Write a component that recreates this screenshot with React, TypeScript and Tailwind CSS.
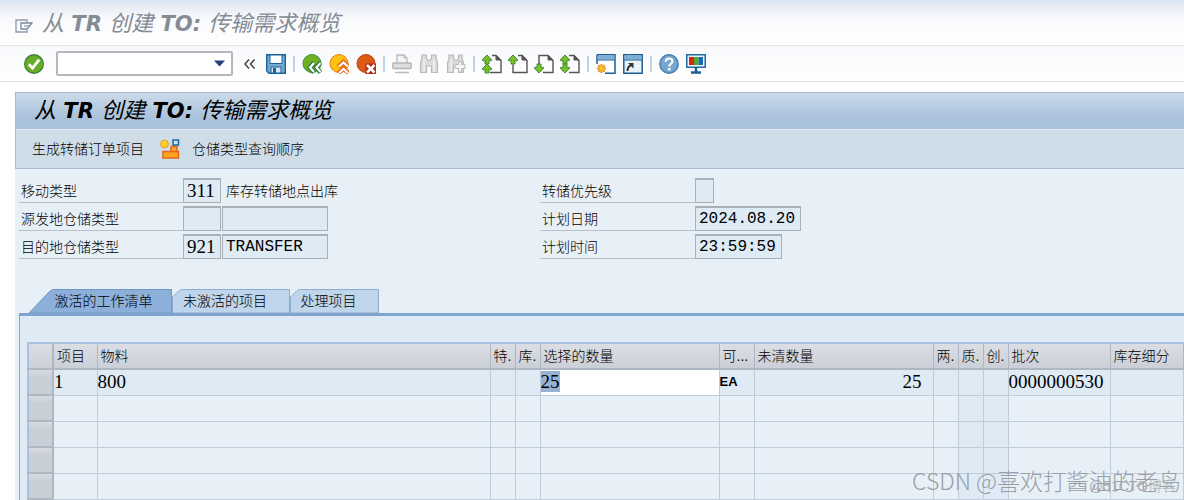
import React from 'react';

const CJK = "font-['Liberation_Sans','Noto_Sans_CJK_SC',sans-serif]";
const SERIF = "font-['Liberation_Serif','Noto_Sans_CJK_SC',serif] text-[19px]";
const MONO = "font-['Liberation_Mono','Noto_Sans_CJK_SC',monospace] text-[16px]";

const Icon: React.FC<{ children: React.ReactNode }> = ({ children }) => (
  <svg width="20" height="20" viewBox="0 0 20 20" fill="none" aria-hidden="true">
    {children}
  </svg>
);

const Tool: React.FC<{ label: string; disabled?: boolean; children: React.ReactNode }> = ({ label, disabled, children }) => (
  <button type="button" aria-label={label} disabled={disabled} className="h-5 w-5 shrink-0">
    <Icon>{children}</Icon>
  </button>
);

const Sep = () => <span className="h-4 w-0.5 shrink-0 bg-[#bfd2e6]" />;

const upArrow = (y: number) => `M5 ${y}l4.600 4.600v1h-2.600v3.400h-4v-3.400h-2.600v-1z`;
const downArrow = (y: number) => `M5 ${y}l4.600 -4.600v-1h-2.600v-3.400h-4v3.400h-2.600v1z`;

const PageIcon: React.FC<{ arrows: string[]; left: string }> = ({ arrows, left }) => (
  <>
    <path d={left} stroke="#555" strokeWidth="1.4" />
    <path d="M14 1v5h5z" fill="#555" stroke="#555" />
    {arrows.map((d) => (
      <path key={d} d={d} fill="#7cbd2c" stroke="#35862f" strokeWidth="0.9" />
    ))}
  </>
);

const Title: React.FC<{ className: string }> = ({ className }) => (
  <h1 className={`flex items-baseline whitespace-pre text-[22px] leading-7 font-normal italic ${className}`}>
    从<b className="font-['DejaVu_Sans',sans-serif] text-[21px]"> TR </b>
    创建<b className="font-['DejaVu_Sans',sans-serif] text-[21px]"> TO: </b>
    传输需求概览
  </h1>
);

interface FieldProps {
  id: string;
  label: string;
  values: { text: string; width: string; font?: string }[];
  note?: string;
  labelWidth: string;
}

const Field: React.FC<FieldProps> = ({ id, label, values, note, labelWidth }) => (
  <div className="flex h-[25px] items-center">
    <label htmlFor={id} className={`h-full border-b border-[#b9c0c7] pl-0.5 leading-[26px] ${labelWidth}`}>
      {label}
    </label>
    <div className="flex h-full gap-px">
      {values.map((v, i) => (
        <input
          key={i}
          id={i === 0 ? id : undefined}
          aria-label={i === 0 ? undefined : `${label} ${i + 1}`}
          readOnly
          defaultValue={v.text}
          className={`h-full border border-t-2 border-[#a9b0b6] bg-[#deebf5] px-[3px] text-black outline-none ${v.width} ${v.font ?? MONO}`}
        />
      ))}
    </div>
    {note && <span className="pl-[5px] leading-[26px]">{note}</span>}
  </div>
);

const columns = [
  { name: '项目', width: 'w-[44px]' },
  { name: '物料', width: 'w-[393px]' },
  { name: '特.', width: 'w-[25px]' },
  { name: '库.', width: 'w-[25px]' },
  { name: '选择的数量', width: 'w-[179px]' },
  { name: '可...', width: 'w-[35px]' },
  { name: '未清数量', width: 'w-[179px]' },
  { name: '两.', width: 'w-[25px]' },
  { name: '质.', width: 'w-[25px]' },
  { name: '创.', width: 'w-[25px]' },
  { name: '批次', width: 'w-[102px]' },
  { name: '库存细分', width: '' },
];

const rows = [
  ['1', '800', '', '', '25', 'EA', '25', '', '', '', '0000000530', ''],
  ...Array.from({ length: 5 }, () => Array<string>(12).fill('')),
];

const cellClass = (row: number, col: number) => {
  if (row === 0 && col === 4) return 'bg-white';
  if (row === 0 || col === 8 || col === 9) return 'bg-[#deebf5]';
  return 'bg-[#e8f0f7]';
};

const Cell: React.FC<{ text: string; col: number }> = ({ text, col }) => {
  if (!text) return null;
  if (col === 4) return <span className="bg-[#96b3d3]">{text}</span>;
  if (col === 5) return <span className="block font-['Liberation_Sans',sans-serif] text-[13px] font-bold">{text}</span>;
  if (col === 6) return <span className="block pr-[11px] text-right">{text}</span>;
  return <>{text}</>;
};

const SystemBar = () => (
  <div className="flex h-[37px] shrink-0 items-center border-y border-[#e0e4ea] bg-linear-to-b from-[#f8f9fc] to-white pl-6">
    <Tool label="确认">
      <circle cx="10" cy="10" r="9.3" fill="#67ad25" stroke="#3d8438" strokeWidth="1.4" />
      <path d="M4.8 10.2l3.8 4L15.2 5.6" stroke="#fff" strokeWidth="2.8" />
    </Tool>
    <div className="ml-3 flex h-[25px] w-[177px] shrink-0 items-center rounded-xs border-2 border-[#b5b8bb] bg-white">
      <input aria-label="命令" className="h-full min-w-0 flex-1 px-1 outline-none" />
      <button type="button" aria-label="历史" className="mr-1.5">
        <svg width="11" height="7" viewBox="0 0 11 7">
          <path d="M0 0.5h11L5.5 6.5z" fill="#23407a" />
        </svg>
      </button>
    </div>
    <button type="button" aria-label="收起" className="ml-[10px] mr-[9px] h-5 w-[14px] shrink-0">
      <svg width="14" height="20" viewBox="0 0 14 20" fill="none">
        <path d="M6 5.5L2 10l4 4.500M11.500 5.500l-4 4.500 4 4.500" stroke="#444" strokeWidth="1.5" />
      </svg>
    </button>
    <div className="flex items-center gap-[7px]">
      <Tool label="保存">
        <path d="M.7.7h18.600v18.600H3L.7 17z" fill="#76a9d0" stroke="#18639c" strokeWidth="1.4" />
        <path d="M4 1h12v8.500H4z" fill="#fff" stroke="#18639c" />
        <path d="M5 13h10v6H5z" fill="#d9e8f3" stroke="#18639c" />
        <path d="M7 14h3v5H7z" fill="#18639c" />
      </Tool>
      <Sep />
      <Tool label="返回">
        <circle cx="10" cy="9.500" r="9" fill="#6eb122" stroke="#3f8b3a" />
        <path d="M12 8.500L8 13.500l4 5M18.500 8.500l-4 5 4 5" stroke="#2b7a38" strokeWidth="4.500" />
        <path d="M12 9L8 13.500l4 4.500M18.500 9l-4 4.500 4 4.500" stroke="#fff" strokeWidth="2.200" />
      </Tool>
      <Tool label="退出">
        <circle cx="10" cy="9.500" r="9" fill="#ffc20e" stroke="#e97816" />
        <path d="M9.500 12.500l5-4.500 5 4.500M9.500 19l5-4.500 5 4.500" stroke="#e2661c" strokeWidth="4.500" />
        <path d="M10 12.500l4.500-4 4.500 4M10 19l4.500-4 4.500 4" stroke="#fff" strokeWidth="2.200" />
      </Tool>
      <Tool label="取消">
        <circle cx="10" cy="9.500" r="9" fill="#dc5a14" stroke="#bd3d12" />
        <path d="M9.500 9.500h10.500v10.500H9.500z" fill="#b32b17" />
        <path d="M11 11l7.500 7.500M18.500 11L11 18.500" stroke="#fff" strokeWidth="2.600" />
      </Tool>
      <Sep />
      <Tool label="打印" disabled>
        <path d="M5 9V1h7l3 3v5" fill="#f4f4f4" stroke="#bbb" strokeWidth="1.300" />
        <path d="M12 1v3h3" stroke="#bbb" />
        <rect x=".7" y="9" width="18.600" height="5.500" rx="1" fill="#dedede" stroke="#b5b5b5" strokeWidth="1.300" />
        <path d="M3 18.500h14" stroke="#bbb" strokeWidth="1.500" />
      </Tool>
      <Tool label="查找" disabled>
        <path d="M3 1h4.500v3L9 6.500h2L12.500 4V1H17v3l1.500 5v9.500h-6V12h-5v6.500h-6V9L3 4z" fill="#dcdcdc" stroke="#b9b9b9" strokeWidth="1.200" />
        <path d="M5 5v12M15 5v12" stroke="#efefef" strokeWidth="1.500" />
      </Tool>
      <Tool label="继续查找" disabled>
        <path d="M3 1h4.500v3L9 6.500h2L12.500 4V1H16v3l1.500 5v9.500h-5V12h-5v6.500h-6V9L3 4z" fill="#dcdcdc" stroke="#b9b9b9" strokeWidth="1.200" />
        <path d="M5 5v12" stroke="#efefef" strokeWidth="1.500" />
        <path d="M12.500 7.500h3v3h3.500v4h-3.500v3.500h-3v-3.500H9v-4h3.500z" fill="#f5f5f5" stroke="#b9b9b9" />
      </Tool>
      <Sep />
      <div className="flex gap-1.5">
        <Tool label="第一页">
          <PageIcon left="M10 1.500h4l5 5v12H8" arrows={[upArrow(1), upArrow(10)]} />
        </Tool>
        <Tool label="上一页">
          <PageIcon left="M10 1.500h4l5 5v12H5v-8" arrows={[upArrow(1)]} />
        </Tool>
        <Tool label="下一页">
          <PageIcon left="M5 10V1.500h9l5 5v12H9" arrows={[downArrow(19)]} />
        </Tool>
        <Tool label="最后一页">
          <PageIcon left="M9 1.500h5l5 5v12H9" arrows={[upArrow(1), downArrow(19)]} />
        </Tool>
      </div>
      <Sep />
      <Tool label="新建会话">
        <path d="M1 .8h18v18.400H9M1 10V.8" fill="#fff" stroke="#1d5f95" strokeWidth="1.500" />
        <path d="M1.500 1.500h17v4h-17z" fill="#7caed6" />
        <path d="M1 6h18" stroke="#1d5f95" />
        <path d="M5.500 10v9M1 14.500h9M2.300 11.300l6.400 6.400M8.700 11.300l-6.400 6.400" stroke="#f59a12" strokeWidth="2" />
        <circle cx="5.500" cy="14.500" r="2" fill="#ffc52c" />
      </Tool>
      <Tool label="创建快捷方式">
        <path d="M.8.8h18.400v18.400H.8z" fill="#eaf2f9" stroke="#1d5f95" strokeWidth="1.500" />
        <path d="M1.500 1.500h17v4h-17z" fill="#7caed6" />
        <path d="M1 6h18" stroke="#1d5f95" />
        <path d="M4.500 17c0-3.500 1-5 4-6" stroke="#333" strokeWidth="2" />
        <path d="M5 9h5.500v5.500z" fill="#333" />
      </Tool>
      <Sep />
      <Tool label="帮助">
        <circle cx="10" cy="10" r="9.200" fill="#76a6d0" stroke="#417fb2" strokeWidth="1.400" />
        <path d="M6.800 7.800c0-4.300 6.600-4.300 6.600-.4 0 2.300-3.100 2.300-3.100 5" stroke="#fff" strokeWidth="2.200" />
        <circle cx="10.200" cy="15.200" r="1.400" fill="#fff" />
      </Tool>
      <Tool label="自定义布局">
        <path d="M.8.8h18.400v12.400H.8z" fill="#eef5fb" stroke="#1d6ba3" strokeWidth="1.500" />
        <path d="M3 3h5v8H3z" fill="#df2118" />
        <path d="M8 3h4.500v8H8z" fill="#4fab2c" />
        <path d="M12.500 3H17v8h-4.500z" fill="#1869b0" />
        <path d="M10 13.500v4M5 18.500h10" stroke="#1d5f95" strokeWidth="2.500" />
      </Tool>
    </div>
  </div>
);

export default function App() {
  return (
    <div className={`relative flex h-screen flex-col overflow-hidden bg-white text-[14px] font-light text-black ${CJK}`}>
      <header className="flex h-[45px] shrink-0 items-center border-t-2 border-[#d9e4f5] bg-linear-to-b from-[#e1e8f1] via-[#f9fafc] via-40% to-white pl-[15px]">
        <svg width="18" height="14" viewBox="0 0 18 14" fill="none" aria-hidden="true" className="mt-1">
          <path d="M12 3V1H1v12h11v-2" stroke="#8d98ad" strokeWidth="1.300" />
          <path d="M6 4h11l-5 6H6z" stroke="#7e89a0" strokeWidth="1.300" />
          <path d="M9 7h5" stroke="#7e89a0" />
        </svg>
        <Title className="pl-[9px] text-[#858b94]" />
      </header>
      <SystemBar />

      <main className="mt-[10px] ml-[15px] flex min-h-0 flex-1 flex-col bg-[#e8f0f7]">
        <div className="shrink-0 border border-r-0 border-[#a9b9cf] bg-[#cfdde9]">
          <div className="flex h-[37px] items-center border-b border-[#dfe9f3] bg-linear-to-b from-[#cbdbe9] to-[#a9c1da] to-70% pl-[18px]">
            <Title className="text-black" />
          </div>
          <div className="flex h-[38px] items-center pl-4">
            <button type="button">生成转储订单项目</button>
            <button type="button" className="ml-4 flex items-center gap-3">
              <Icon>
                <path d="M3 12.500h15.500v6.500H3z" fill="#ffa51d" stroke="#e2661c" strokeWidth="1.500" />
                <path d="M11 7.500h6v5h-6z" fill="#ffa51d" stroke="#e2661c" strokeWidth="1.500" />
                <circle cx="4.500" cy="5" r="3.900" fill="#ffd02e" stroke="#ef951b" />
                <path d="M13 1h5.500v5H13z" fill="#cfe2f1" stroke="#1d6ba3" strokeWidth="1.500" />
              </Icon>
              仓储类型查询顺序
            </button>
          </div>
        </div>

        <form className="flex shrink-0 pt-[9px] pl-1">
          <div className="flex w-[521px] shrink-0 flex-col gap-[3px]">
            <Field id="move" label="移动类型" labelWidth="w-[164px]" note="库存转储地点出库" values={[{ text: '311', width: 'w-[38px]', font: SERIF }]} />
            <Field id="source" label="源发地仓储类型" labelWidth="w-[164px]" values={[{ text: '', width: 'w-[38px]' }, { text: '', width: 'w-[106px]' }]} />
            <Field id="target" label="目的地仓储类型" labelWidth="w-[164px]" values={[{ text: '921', width: 'w-[38px]', font: SERIF }, { text: 'TRANSFER', width: 'w-[106px]' }]} />
          </div>
          <div className="flex flex-col gap-[3px]">
            <Field id="priority" label="转储优先级" labelWidth="w-[155px]" values={[{ text: '', width: 'w-[19px]' }]} />
            <Field id="date" label="计划日期" labelWidth="w-[155px]" values={[{ text: '2024.08.20', width: 'w-[106px]' }]} />
            <Field id="time" label="计划时间" labelWidth="w-[155px]" values={[{ text: '23:59:59', width: 'w-[87px]' }]} />
          </div>
        </form>

        <div className="mt-[30px] flex h-6 shrink-0 pl-[14px]" role="tablist">
          <button type="button" role="tab" aria-selected="true" className="relative h-full w-[143px] pl-1.5 text-center">
            <svg className="absolute inset-0" width="143" height="24" viewBox="0 0 143 24">
              <path d="M0 24L20 3q2-2.500 5-2.500h117.500V24z" fill="#8db0da" stroke="#6f97c3" />
            </svg>
            <span className="relative">激活的工作清单</span>
          </button>
          <button type="button" role="tab" aria-selected="false" className="relative h-full w-[118px] pr-3 text-center">
            <svg className="absolute inset-0" width="118" height="24" viewBox="0 0 118 24">
              <path d="M.5 24V8l6-6q1.500-1.500 4-1.500h107V24z" fill="#bfd5eb" stroke="#8eacd0" />
            </svg>
            <span className="relative">未激活的项目</span>
          </button>
          <button type="button" role="tab" aria-selected="false" className="relative h-full w-[89px] pr-3 text-center">
            <svg className="absolute inset-0" width="89" height="24" viewBox="0 0 89 24">
              <path d="M.5 24V8l6-6q1.500-1.500 4-1.500h78V24z" fill="#bfd5eb" stroke="#8eacd0" />
            </svg>
            <span className="relative">处理项目</span>
          </button>
        </div>

        <section className="ml-1 min-h-0 flex-1 overflow-hidden border-t-3 border-l border-[#7fa5cf] bg-[#deebf5] pt-[26px] pl-[7px]">
          <table className="w-full table-fixed border-collapse border-t-2 border-l-2 border-[#a9c3de]">
            <colgroup>
              <col className="w-[25px]" />
              {columns.map((c) => (
                <col key={c.name} className={c.width} />
              ))}
            </colgroup>
            <thead>
              <tr className="h-[26px] bg-linear-to-b from-[#dcdfe4] to-[#cacfd7]">
                <th aria-label="选择" className="border-r-2 border-b-2 border-[#afb7c2] p-0" />
                {columns.map((c) => (
                  <th key={c.name} className="overflow-hidden border-r border-b-2 border-[#afb7c2] p-0 pl-[3px] text-left leading-5 font-light whitespace-nowrap">
                    {c.name}
                  </th>
                ))}
              </tr>
            </thead>
            <tbody>
              {rows.map((row, r) => (
                <tr key={r} className="h-[26px]">
                  <td className="border-r-2 border-b-2 border-[#afb7c2] bg-linear-to-b from-[#d8dce1] to-[#c9cfd6] to-30% p-0" />
                  {row.map((text, c) => (
                    <td key={c} className={`border-r border-b border-[#c0ccd9] p-0 leading-5 font-normal text-black ${SERIF} ${cellClass(r, c)}`}>
                      <Cell text={text} col={c} />
                    </td>
                  ))}
                </tr>
              ))}
            </tbody>
          </table>
        </section>
      </main>

      <div className="pointer-events-none absolute right-[3px] bottom-1 font-['Noto_Sans_CJK_SC',sans-serif] text-[23px] leading-8 whitespace-nowrap text-[#9a9fa5]">
        CSDN @喜欢打酱油的老鸟
      </div>
      <div className="pointer-events-none absolute right-2 bottom-1 text-[14px] leading-5 whitespace-nowrap text-[#a6abb1]">
        @51CTO博客
      </div>
    </div>
  );
}
